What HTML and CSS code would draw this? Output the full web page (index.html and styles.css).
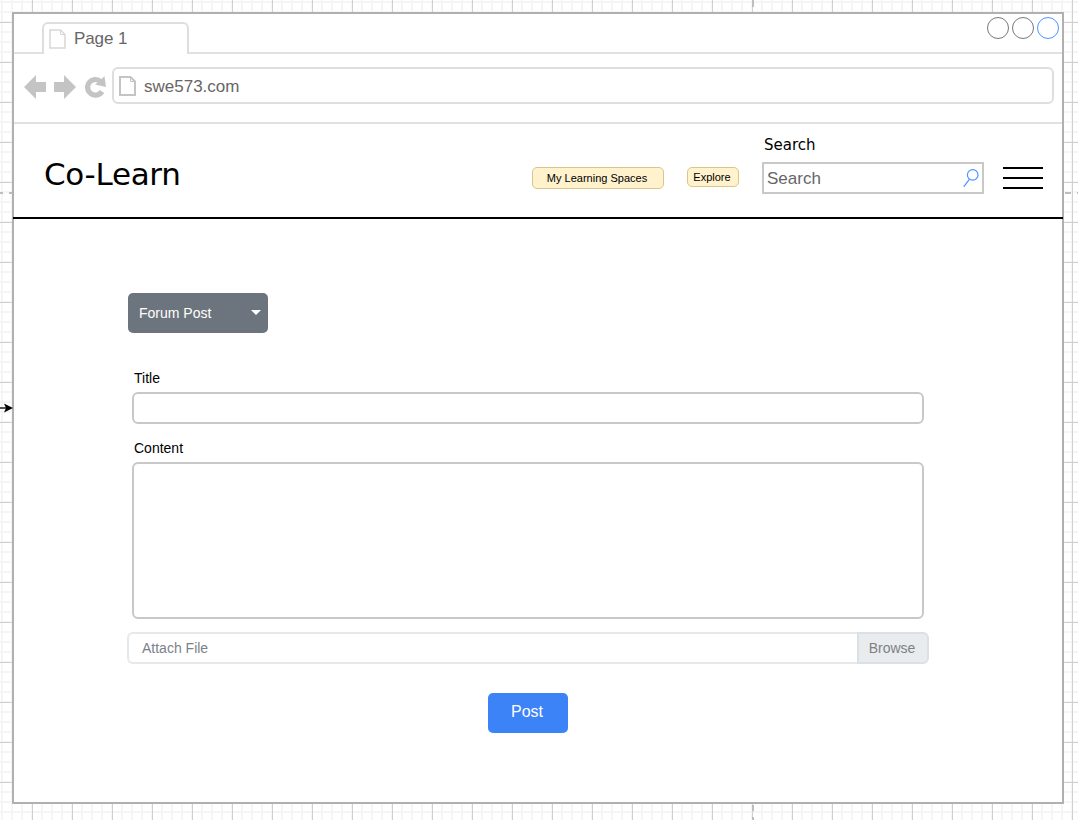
FILE: index.html
```html
<!DOCTYPE html>
<html lang="en">
<head>
<meta charset="utf-8">
<title>Co-Learn</title>
<link rel="stylesheet" href="styles.css">
</head>
<body>
<main class="canvas">
  <section class="browser">
    <div class="tabs">
      <div class="tab">
        <svg class="page-icon" width="17" height="20" viewBox="0 0 17 20" fill="none" stroke="#d8d8d8" stroke-width="1.500"><path d="M1 1h10.500L16 5.500V19H1z"/><path d="M11.500 1v4.500H16" stroke-width="1"/></svg>
        <span>Page 1</span>
      </div>
      <div class="window-controls"><i></i><i></i><i class="active"></i></div>
    </div>
    <div class="toolbar">
      <svg class="nav-icons" width="84" height="28" viewBox="0 0 84 28" fill="#c4c4c4">
        <path d="M0 13 12 1v7h10v10H12v7zM52 13 40 1v7H30v10h10v7z"/>
        <path d="M76.500 7.400A7.800 7.800 0 1 0 78 17.500" fill="none" stroke="#c4c4c4" stroke-width="5.200"/>
        <path d="M80.500 2.200 82 13l-11-2.500z"/>
      </svg>
      <div class="address">
        <svg width="17" height="20" viewBox="0 0 17 20" fill="none" stroke="#c4c4c4" stroke-width="2"><path d="M1 1h10.500L16 5.500V19H1z"/><path d="M11.500 1v4.500H16" stroke-width="1"/></svg>
        <span>swe573.com</span>
      </div>
    </div>
    <header class="header">
      <h1 class="brand">Co-Learn</h1>
      <button class="pill spaces">My Learning Spaces</button>
      <button class="pill explore">Explore</button>
      <div class="search">
        <div class="search-label">Search</div>
        <div class="search-box">
          <span>Search</span>
          <svg width="16" height="20" viewBox="0 0 16 20" fill="none" stroke="#4c96ff" stroke-width="1.200"><circle cx="9.700" cy="6.900" r="5.300"/><path d="M6.500 11.200.7 18.800"/></svg>
        </div>
      </div>
      <div class="menu"><i></i><i></i><i></i></div>
    </header>
    <div class="content">
      <button class="type-select"><span>Forum Post</span><i class="caret"></i></button>
      <div class="fields">
        <div class="label">Title</div>
        <div class="box title-box"></div>
        <div class="label">Content</div>
        <div class="box content-box"></div>
      </div>
      <div class="file"><span class="file-name">Attach File</span><span class="browse">Browse</span></div>
      <button class="post">Post</button>
    </div>
  </section>
  <svg class="marks" width="1078" height="820" viewBox="0 0 1078 820">
    <path d="M753 0v7M753 805v6M753 817v3M0 193h3M9 193h3M1065 193h6M1077 193h1" stroke="#bdbdbd" stroke-width="2" fill="none"/>
    <path d="M0 408h7" stroke="#555" stroke-width="2"/>
    <path d="M13 408 4 412.500l2-4.500-2-4.500z"/>
  </svg>
</main>
</body>
</html>
```
FILE: styles.css
```css
* { box-sizing: border-box; }
body { margin: 0; font-family: "Liberation Sans", Arial, sans-serif; }
button { font-family: inherit; padding: 0; }
.canvas {
  position: relative;
  width: 1078px;
  height: 820px;
  padding: 12px;
  overflow: hidden;
  background-color: #fff;
  background-image:
    linear-gradient(90deg, #d0d0d0 1px, transparent 1px),
    linear-gradient(#d0d0d0 1px, transparent 1px),
    linear-gradient(90deg, #f5f5f5 2px, transparent 2px),
    linear-gradient(#f5f5f5 2px, transparent 2px);
  background-size: 40px 40px, 40px 40px, 10px 10px, 10px 10px;
  background-position: 32px 22px, 32px 22px, 1px 1px, 1px 1px;
}
.marks { position: absolute; left: 0; top: 0; pointer-events: none; }
.browser { width: 1052px; height: 792px; border: 2px solid #b0b0b0; background: #fff; }
.tabs {
  display: flex;
  justify-content: space-between;
  height: 40px;
  padding: 3px 3px 0 28px;
  background: linear-gradient(#e1e1e1, #e1e1e1) left bottom / 100% 2px no-repeat;
}
.tab {
  display: flex;
  align-items: center;
  gap: 8px;
  width: 147px;
  height: 32px;
  margin-top: 5px;
  padding-left: 5px;
  border: 2px solid #dedede;
  border-bottom: 0;
  border-radius: 6px 6px 0 0;
  background: #fff;
  color: #666;
  font-size: 17px;
  letter-spacing: -.1px;
}
.window-controls { display: flex; gap: 3px; }
.window-controls i { width: 22px; height: 22px; border: 1px solid #777; border-radius: 50%; }
.window-controls .active { border-color: #4c96ff; }
.toolbar { display: flex; height: 70px; padding: 13px 8px 0 10px; border-bottom: 2px solid #e1e1e1; }
.nav-icons { margin: 7px 4px 0 0; }
.address {
  display: flex;
  align-items: center;
  gap: 8px;
  width: 942px;
  height: 37px;
  padding-left: 5px;
  border: 2px solid #dedede;
  border-radius: 6px;
  color: #666;
  font-size: 17px;
}
.address span { padding-top: 2px; }
.header {
  display: flex;
  align-items: flex-start;
  height: 95px;
  margin: 0 -1px;
  border-bottom: 2px solid #000;
}
.brand {
  width: 488px;
  margin: 32px 0 0 31px;
  font: 31px/37px "DejaVu Sans", Verdana, sans-serif;
  letter-spacing: -.3px;
  white-space: nowrap;
}
.pill { border: 1px solid #dac68a; border-radius: 5px; background: #fff2cc; color: #000; font-size: 11px; white-space: nowrap; }
.spaces { width: 132px; height: 22px; margin-top: 43px; padding-right: 2px; }
.explore { width: 52px; height: 20px; margin: 43px 0 0 23px; padding-right: 2px; }
.search { width: 222px; margin-left: 23px; }
.search-label { height: 38px; padding: 11px 0 0 2px; font: 15px/20px "DejaVu Sans", Verdana, sans-serif; }
.search-box {
  display: flex;
  align-items: center;
  justify-content: space-between;
  height: 32px;
  padding: 0 3px;
  border: 2px solid #c8c8c8;
  color: #666;
  font-size: 17px;
}
.search-box span { padding-top: 2px; }
.menu { display: flex; flex-direction: column; gap: 8px; width: 40px; margin: 43px 0 0 19px; }
.menu i { height: 2px; background: #000; }
.content { padding: 74px 134px 0 114px; }
.type-select {
  display: flex;
  align-items: center;
  justify-content: space-between;
  width: 140px;
  height: 40px;
  padding: 0 7px 0 11px;
  border: 0;
  border-radius: 5px;
  background: #6c757d;
  color: #fff;
  font-size: 14px;
}
.caret { margin-bottom: 1px; border: 5px solid transparent; border-top-color: #fff; border-bottom: 0; }
.fields { margin-top: 35px; padding: 0 4px; }
.label { height: 24px; padding-left: 2px; color: #000; font-size: 14px; line-height: 20px; }
.box { width: 792px; border: 2px solid #c8c8c8; border-radius: 6px; }
.title-box { height: 32px; margin-bottom: 14px; }
.content-box { height: 157px; }
.file { display: flex; width: 802px; height: 32px; margin: 13px 0 0 -1px; color: #7b8287; font-size: 14px; line-height: 28px; }
.file-name { flex: 1; padding-left: 13px; border: 2px solid #e6e8ec; border-right: 0; border-radius: 6px 0 0 6px; }
.browse { width: 72px; border: 2px solid #dcdfe3; border-radius: 0 6px 6px 0; background: #e9ecef; text-align: center; padding-right: 2px; }
.post { display: block; width: 80px; height: 40px; margin: 29px 0 0 360px; padding: 0 2px 3px 0; border: 0; border-radius: 5px; background: #3b83f6; color: #fff; font-size: 16px; }
```
